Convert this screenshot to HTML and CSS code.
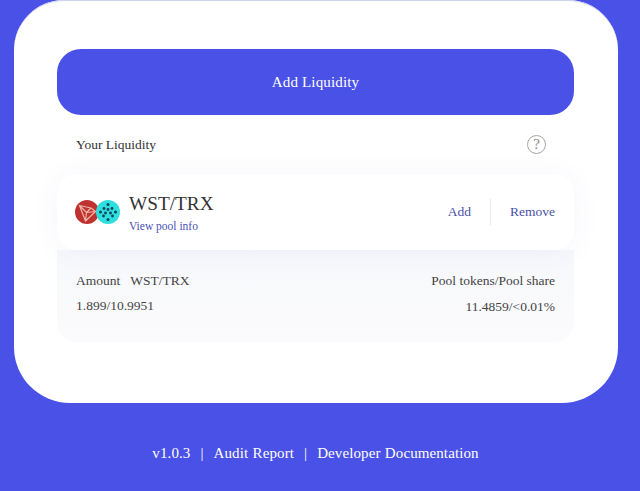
FILE: index.html
```html
<!DOCTYPE html>
<html lang="en">
  <head>
    <meta charset="UTF-8" />
    <title>Liquidity</title>
    <link rel="stylesheet" href="styles.css">
  </head>
  <body>
    <div class="main">
      <button class="addBtn">Add Liquidity</button>

      <div class="title">
        <span>Your Liquidity</span>
        <span class="help">?</span>
      </div>

      <div class="pool">
        <div class="pair">
          <div class="logos">
            <svg class="logo" viewBox="0 0 24 24" width="24" height="24">
              <circle cx="12" cy="12" r="12" fill="#c0322f" />
              <path d="M4.5 5.5 L16 8 L20.5 11.5 L10.5 21 Z M4.5 5.5 L11.5 12.5 L10.5 21 M11.5 12.5 L20.5 11.5 M11.5 12.5 L16 8" fill="none" stroke="#eeb4a8" stroke-width="1.2" stroke-linejoin="round" />
            </svg>
            <svg class="logo logoSecond" viewBox="0 0 24 24" width="24" height="24">
              <circle cx="12" cy="12" r="12" fill="#2fdfe0" />
              <g fill="#0d4655">
                <circle cx="12" cy="4.5" r="1.5" />
                <circle cx="8" cy="8.5" r="1.4" />
                <circle cx="16" cy="8.5" r="1.4" />
                <circle cx="12" cy="9.5" r="1.4" />
                <circle cx="4.5" cy="12" r="1.5" />
                <circle cx="19.5" cy="12" r="1.5" />
                <circle cx="9.5" cy="13" r="1.4" />
                <circle cx="14.5" cy="13" r="1.4" />
                <circle cx="7.5" cy="16" r="1.4" />
                <circle cx="16.5" cy="16" r="1.4" />
                <circle cx="12" cy="19.5" r="1.5" />
              </g>
            </svg>
          </div>
          <div>
            <div class="pairName">WST/TRX</div>
            <a class="poolInfo">View pool info</a>
          </div>
        </div>
        <div class="actions">
          <a class="action">Add</a>
          <span class="divider"></span>
          <a class="action">Remove</a>
        </div>
      </div>

      <div class="details">
        <div class="row">
          <span class="amount"><span>Amount</span><span>WST/TRX</span></span>
          <span>Pool tokens/Pool share</span>
        </div>
        <div class="row rowValues">
          <span>1.899/10.9951</span>
          <span class="share">11.4859/&lt;0.01%</span>
        </div>
      </div>
    </div>

    <div class="footer">
      <span>v1.0.3</span>
      <span>|</span>
      <span>Audit Report</span>
      <span>|</span>
      <span>Developer Documentation</span>
    </div>
  </body>
</html>
```

FILE: styles.css
```css
* {
  margin: 0;
  padding: 0;
  box-sizing: border-box;
  font-family: "Liberation Serif", "Times New Roman", serif;
}

body {
  height: 491px;
  overflow: hidden;
  background: #4a51e6;
  color: #333;
}

.main {
  width: 604px;
  height: 403px;
  margin-left: 14px;
  padding: 49px 44px 0 43px;
  background: #ffffff;
  border-radius: 50px 50px 56px 56px;
  box-shadow: inset 0 1px 0 #cfd1f3;
}

.addBtn {
  display: block;
  width: 100%;
  height: 66px;
  border: none;
  border-radius: 24px;
  background: #4a51e6;
  color: #ffffff;
  font-size: 15px;
  letter-spacing: 0.15px;
}

.title {
  display: flex;
  justify-content: space-between;
  align-items: center;
  height: 59px;
  padding: 0 28px 0 19px;
  font-size: 13.5px;
}

.help {
  width: 19px;
  height: 19px;
  border: 1px solid #a5a5a5;
  border-radius: 50%;
  color: #8a8a8a;
  font-size: 15px;
  line-height: 17px;
  text-align: center;
}

.pool {
  position: relative;
  display: flex;
  justify-content: space-between;
  align-items: center;
  height: 76px;
  padding: 0 19px 0 18px;
  background: #ffffff;
  border-radius: 20px;
  box-shadow: 0 2px 30px rgba(80, 85, 190, 0.05);
}

.pair {
  display: flex;
  align-items: center;
  gap: 9px;
}

.logos {
  display: flex;
}

.logoSecond {
  margin-left: -3px;
}

.pairName {
  padding-top: 1px;
  font-size: 19.3px;
  line-height: 24px;
  color: #333;
}

.poolInfo {
  display: block;
  margin-top: 3px;
  font-size: 11.5px;
  line-height: 14px;
  color: #4a51b8;
}

.actions {
  display: flex;
  align-items: center;
  gap: 19px;
  font-size: 13.5px;
  color: #4a51a8;
}

.divider {
  width: 1px;
  height: 26px;
  background: #e8e8ee;
}

.details {
  height: 92px;
  padding: 22px 19px 0;
  background: linear-gradient(#f7f8fb, #fbfbfd);
  border-radius: 0 0 20px 20px;
  font-size: 13.5px;
}

.row {
  display: flex;
  justify-content: space-between;
  line-height: 18px;
  color: #444;
}

.rowValues {
  margin-top: 7px;
}

.amount {
  display: flex;
  gap: 10px;
}

.share {
  padding-top: 1px;
}

.footer {
  display: flex;
  justify-content: center;
  gap: 10px;
  width: 631px;
  padding-top: 41px;
  font-size: 15px;
  line-height: 18px;
  letter-spacing: 0.1px;
  word-spacing: 0.5px;
  color: #ffffff;
}
```
